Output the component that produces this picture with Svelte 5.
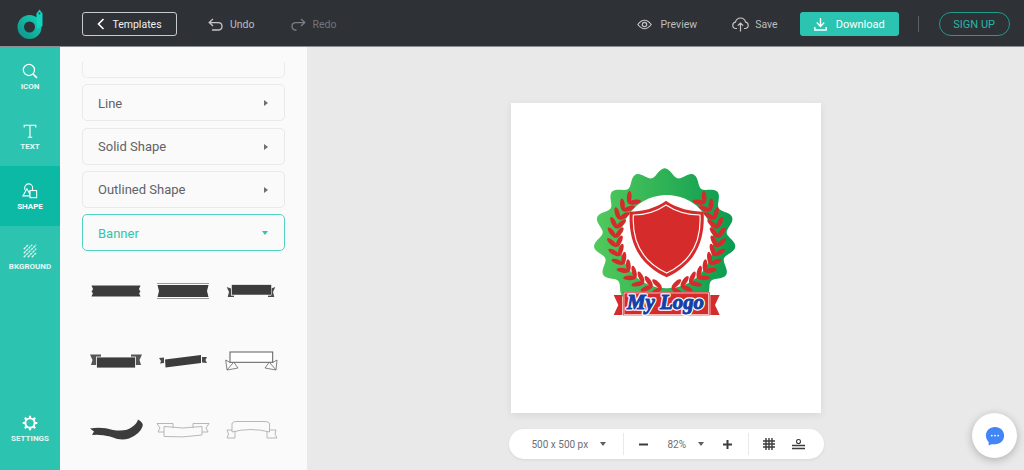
<script>
  const tools = [
    { id: 'icon', label: 'ICON' },
    { id: 'text', label: 'TEXT' },
    { id: 'shape', label: 'SHAPE', active: true },
    { id: 'bg', label: 'BKGROUND' }
  ];
  const groups = ['Line', 'Solid Shape', 'Outlined Shape'];

  // wavy seal outline around the logo
  function sealPath(cx, cy, r, amp, bumps) {
    const pts = [];
    for (let i = 0; i < 360; i++) {
      const a = (i / 360) * Math.PI * 2;
      const rr = r + amp * Math.cos(bumps * (a + Math.PI / 2));
      pts.push(`${(cx + rr * Math.cos(a)).toFixed(1)},${(cy + rr * Math.sin(a)).toFixed(1)}`);
    }
    return 'M' + pts.join('L') + 'Z';
  }
  const seal = sealPath(239, 238, 200, 13, 15);

  // laurel leaves of the right branch, the left one is a mirrored <use>
  const leaves = [];
  for (let deg = 84; deg >= -42; deg -= 10.5) {
    const a = (deg * Math.PI) / 180;
    const sx = 245 + 153 * Math.cos(a);
    const sy = 232 + 153 * Math.sin(a);
    for (const rot of [deg - 52, deg - 128]) {
      const r = (rot * Math.PI) / 180;
      leaves.push({ x: sx + 18 * Math.cos(r), y: sy + 18 * Math.sin(r), rot });
    }
  }
</script>

<div class="app">
  <header class="topbar">
    <svg class="brand" width="27" height="30" viewBox="0 0 27 30" aria-hidden="true">
      <defs>
        <linearGradient id="ring" x1="0" x2="1" y1="1" y2="0">
          <stop offset="0" stop-color="#0f9a8e"/>
          <stop offset="1" stop-color="#16c9b2"/>
        </linearGradient>
      </defs>
      <circle cx="12.500" cy="18" r="8.750" fill="none" stroke="url(#ring)" stroke-width="6.500"/>
      <path d="M19.500 14 V4.500 L22.500 .5 L25.500 4.500 V17 L20 20 Z" fill="#10d4bd"/>
      <circle cx="22.500" cy="4.500" r=".9" fill="#2e3136"/>
    </svg>
    <button class="tpl">
      <svg width="8" height="12" viewBox="0 0 8 12" aria-hidden="true"><path d="M6.500 1 L1.500 6 L6.500 11" fill="none" stroke="#fff" stroke-width="1.600"/></svg>
      Templates
    </button>
    <span class="act undo">
      <svg width="15" height="13" viewBox="0 0 15 13" aria-hidden="true"><path d="M5 1 L1.200 4.600 L5 8 M1.500 4.600 H10 Q14 4.600 14 8.200 Q14 12 10 12 H4" fill="none" stroke="#c4c6c8" stroke-width="1.300"/></svg>
      Undo
    </span>
    <span class="act redo">
      <svg width="15" height="13" viewBox="0 0 15 13" aria-hidden="true"><path d="M10 1 L13.800 4.600 L10 8 M13.500 4.600 H5 Q1 4.600 1 8.200 Q1 12 5 12 H5.500" fill="none" stroke="#7b7e81" stroke-width="1.300"/></svg>
      Redo
    </span>
    <span class="act preview">
      <svg width="15" height="11" viewBox="0 0 15 11" aria-hidden="true"><path d="M.8 5.500 Q7.500 -3 14.200 5.500 Q7.500 14 .8 5.500 Z" fill="none" stroke="#c4c6c8" stroke-width="1.200"/><circle cx="7.500" cy="5.500" r="2.200" fill="none" stroke="#c4c6c8" stroke-width="1.200"/></svg>
      Preview
    </span>
    <span class="act save">
      <svg width="17" height="15" viewBox="0 0 17 15" aria-hidden="true"><path d="M5 11.500 H4 Q.8 11.500 .8 8.300 Q.8 5.600 3.400 5.200 Q4.600 1 8.500 1 Q12.500 1 13.600 5.200 Q16.200 5.600 16.200 8.300 Q16.200 11.500 13 11.500 H12 M8.500 14.500 V6 M5.800 8.600 L8.500 6 L11.200 8.600" fill="none" stroke="#c4c6c8" stroke-width="1.200"/></svg>
      Save
    </span>
    <button class="download">
      <svg width="13" height="13" viewBox="0 0 13 13" aria-hidden="true"><path d="M6.500 0 V8 M2.800 4.600 L6.500 8.400 L10.200 4.600 M.8 9 V12 H12.200 V9" fill="none" stroke="#fff" stroke-width="1.400"/></svg>
      Download
    </button>
    <span class="sep"></span>
    <button class="signup">SIGN UP</button>
  </header>

  <div class="body">
    <nav class="rail">
      {#each tools as t}
        <div class="tool" class:active={t.active}>
          {#if t.id === 'icon'}
            <svg width="16" height="16" viewBox="0 0 18 18" aria-hidden="true"><circle cx="7.800" cy="7.800" r="6.300" fill="none" stroke="#fff" stroke-width="1.400"/><path d="M12.400 12.400 L16.800 16.800" stroke="#fff" stroke-width="1.800"/></svg>
          {:else if t.id === 'text'}
            <svg width="16" height="16" viewBox="0 0 18 18" aria-hidden="true"><path d="M2.500 5 V2.500 H15.500 V5 M9 2.500 V16 M6.500 16 H11.500" fill="none" stroke="#fff" stroke-width="1.300"/></svg>
          {:else if t.id === 'shape'}
            <svg width="16" height="16" viewBox="0 0 18 18" aria-hidden="true"><circle cx="7.500" cy="5.500" r="4.500" fill="none" stroke="#fff" stroke-width="1.200"/><path d="M5.500 6.500 L1 14.500 H10 Z" fill="#0bb9a5" stroke="#fff" stroke-width="1.200"/><rect x="9" y="8.500" width="7.500" height="8" fill="#0bb9a5" stroke="#fff" stroke-width="1.200"/></svg>
          {:else}
            <svg width="16" height="16" viewBox="0 0 18 18" aria-hidden="true"><path d="M2 7 L7 2 M2 11.500 L11.500 2 M2 16 L16 2 M6.500 16 L16 6.500 M11 16 L16 11" stroke="#d8f4ef" stroke-width="1.500" stroke-dasharray="3 .8"/></svg>
          {/if}
          <span>{t.label}</span>
        </div>
      {/each}
      <div class="tool settings">
        <svg width="16" height="16" viewBox="0 0 18 18" aria-hidden="true"><circle cx="9" cy="9" r="5.200" fill="none" stroke="#fff" stroke-width="2.200"/><path d="M9 .8 V3.500 M9 14.500 V17.200 M.8 9 H3.500 M14.500 9 H17.200 M3.200 3.200 L5 5 M13 13 L14.800 14.800 M3.200 14.800 L5 13 M13 5 L14.800 3.200" stroke="#fff" stroke-width="2.400"/></svg>
        <span>SETTINGS</span>
      </div>
    </nav>

    <aside class="panel">
      <div class="stub"></div>
      {#each groups as g}
        <div class="group">{g}<i class="arrow"></i></div>
      {/each}
      <div class="group open">Banner<i class="arrow down"></i></div>

      <div class="banners">
        <svg viewBox="0 0 64 32" aria-hidden="true">
          <path d="M7.500 10.500 H56.500 L55 14 L56.500 17 L55 18 L56.500 21.500 H7.500 L9 18 L7.500 17 L9 14 Z" fill="#3c3c3c"/>
        </svg>
        <svg viewBox="0 0 64 32" aria-hidden="true">
          <path d="M6 8.500 H58 M6 23.500 H58" stroke="#9a9a9a" stroke-width="1"/>
          <path d="M6.500 10 H57.500 L56 16 L57.500 22 H6.500 L8 16 Z" fill="#3c3c3c"/>
        </svg>
        <svg viewBox="0 0 64 32" aria-hidden="true">
          <path d="M7.700 12 L12 13.500 V20.500 H15 V22 H8.700 L10 17 Z M56.300 12 L52 13.500 V20.500 H49 V22 H55.300 L54 17 Z" fill="#4a4a4a"/>
          <rect x="12.500" y="9.700" width="40" height="10.300" fill="#3c3c3c" stroke="#fff" stroke-width=".5"/>
        </svg>
        <svg viewBox="0 0 64 32" aria-hidden="true">
          <path d="M6 9.500 H17 V20 H7 L8.500 15 Z M58 9.500 H47 V20 H57 L55.500 15 Z" fill="#555"/>
          <rect x="12.500" y="12" width="39" height="11" fill="#3c3c3c" stroke="#fafafa" stroke-width=".8"/>
        </svg>
        <svg viewBox="0 0 64 32" aria-hidden="true">
          <path d="M8 13 L13 12.500 V18 L9 18.500 L10 16 Z M56 12 L51 12 V17.500 L56 18 L54.500 15 Z" fill="#4a4a4a"/>
          <path d="M14 14.500 L50 10 L50 18 L14.500 22.500 Z" fill="#3c3c3c"/>
        </svg>
        <svg viewBox="0 0 64 32" aria-hidden="true">
          <rect x="11" y="7" width="42.700" height="10.300" fill="#fff" stroke="#5c5c5c" stroke-width="1"/>
          <path d="M11 17.500 L6.700 15 L8 25 L19 23 L15 17.500 M8 25 L14 18 M53.700 17.500 L58 15 L57 25 L46 23 L50 17.500 M57 25 L51 18" fill="none" stroke="#666" stroke-width=".8"/>
        </svg>
        <svg viewBox="0 0 64 32" aria-hidden="true">
          <path d="M6 14.500 Q18 12.500 29 16 Q42 18 48 13 Q53 9.500 54 5.500 Q60 9 58.500 12.500 Q56 20 45 24.500 Q36 27 26 22.500 Q16 20 8 21 L10 17.500 Z" fill="#3c3c3c"/>
        </svg>
        <svg viewBox="0 0 64 32" aria-hidden="true">
          <g fill="#fafafa" stroke="#a6a6a6" stroke-width=".8">
            <path d="M6 9.500 H22 V18 H7 L9 14 Z"/>
            <path d="M58 9.500 H42 V18 H57 L55 14 Z"/>
            <path d="M13 12.500 Q32 15.500 51 12.500 V21 Q32 24 13 22.500 Z"/>
          </g>
        </svg>
        <svg viewBox="0 0 64 32" aria-hidden="true">
          <g fill="#fafafa" stroke="#a6a6a6" stroke-width=".8">
            <path d="M8 16 H16 V24 H8 L9.500 20 Z"/>
            <path d="M57 16 H48 V24 H58 L56 20 Z"/>
            <path d="M13 18 V10 Q13 7.500 18 7.500 H45 Q50.500 7.500 50.500 10 V18 Q32 13 13 18 Z"/>
          </g>
        </svg>
      </div>
    </aside>

    <main class="stage">
      <div class="canvas">
        <svg class="logo" width="160" height="165" viewBox="0 0 480 495" aria-label="My Logo">
          <defs>
            <linearGradient id="green" x1="0" x2="1" y1="0" y2="0">
              <stop offset="0" stop-color="#52ca5c"/>
              <stop offset="1" stop-color="#0a9a50"/>
            </linearGradient>
            <g id="branch">
              {#each leaves as l}
                <ellipse cx={l.x} cy={l.y} rx="19" ry="7" fill="#d62b2b" transform="rotate({l.rot} {l.x} {l.y})"/>
              {/each}
            </g>
          </defs>
          <path d={seal} fill="url(#green)"/>
          <circle cx="245" cy="245" r="140" fill="#fff"/>
          <use href="#branch"/>
          <use href="#branch" transform="translate(490 0) scale(-1 1)"/>
          <path d="M243 122 C275 145 320 155 356 155 C360 240 335 310 245 352 C155 310 130 240 134 155 C170 155 212 145 243 122 Z" fill="#d62b2b"/>
          <path d="M243 135 C273 155 312 165 345 165 C349 240 325 302 245 339 C165 302 141 240 145 165 C178 165 214 155 243 135 Z" fill="#d62b2b" stroke="#fff" stroke-width="3.500"/>
          <path d="M86 405 H112 V465 H86 L100 435 Z M404 405 H376 V465 H404 L390 435 Z" fill="#d62b2b"/>
          <rect x="114" y="396" width="260" height="70" fill="#d62b2b"/>
          <rect x="117" y="399" width="254" height="64" fill="none" stroke="#fff" stroke-width="2"/>
          <text class="mark halo" x="126" y="448" textLength="231" lengthAdjust="spacingAndGlyphs">My Logo</text>
          <text class="mark" x="126" y="448" textLength="231" lengthAdjust="spacingAndGlyphs">My Logo</text>
        </svg>
      </div>
      <div class="toolbar">
        <span class="tb-size">500 x 500 px</span>
        <i class="caret"></i>
        <span class="tb-sep first"></span>
        <svg class="minus" width="9" height="3" viewBox="0 0 9 3" aria-hidden="true"><rect width="9" height="2" y=".5" fill="#3c3c3c"/></svg>
        <span class="tb-zoom">82%</span>
        <i class="caret small"></i>
        <svg class="plus" width="9" height="9" viewBox="0 0 9 9" aria-hidden="true"><path d="M0 3.500 H9 V5.500 H0 Z M3.500 0 H5.500 V9 H3.500 Z" fill="#3c3c3c"/></svg>
        <span class="tb-sep second"></span>
        <svg class="gridicon" width="12" height="12" viewBox="0 0 12 12" aria-hidden="true"><path d="M0 3 H12 M0 6 H12 M0 9 H12 M3 0 V12 M6 0 V12 M9 0 V12" stroke="#3c3c3c" stroke-width="1.400"/></svg>
        <svg class="basline" width="13" height="11" viewBox="0 0 13 11" aria-hidden="true"><circle cx="6.500" cy="2.500" r="2" fill="none" stroke="#3c3c3c" stroke-width="1.100"/><path d="M0 6.500 H13 M0 9.500 H13" stroke="#3c3c3c" stroke-width="1.300"/></svg>
      </div>
      <button class="chat" aria-label="Chat">
        <svg width="20" height="20" viewBox="0 0 22 22" aria-hidden="true">
          <path d="M11 1 C17 1 21 5 21 10.500 C21 16 17 20 11 20 H7 L4 21.500 V17.500 C2 15.500 1 13 1 10.500 C1 5 5 1 11 1 Z" fill="#4285f4"/>
          <circle cx="7.500" cy="10.500" r="1" fill="#fff"/><circle cx="11" cy="10.500" r="1" fill="#fff"/><circle cx="14.500" cy="10.500" r="1" fill="#fff"/>
        </svg>
      </button>
    </main>
  </div>
</div>

<style>
  :global(body) {
    margin: 0;
    font-family: Roboto, "Liberation Sans", sans-serif;
  }

  .app {
    width: 1024px;
    height: 470px;
    display: flex;
    flex-direction: column;
    overflow: hidden;
  }

  .topbar {
    height: 46px;
    flex-shrink: 0;
    box-sizing: border-box;
    padding-top: 2px;
    background: #2e3136;
    box-shadow: 0 1px 0 #8b8d90;
    position: relative;
    z-index: 1;
    display: flex;
    align-items: center;
    font-size: 10.500px;
  }

  .brand { margin: 0 0 0 17px; }

  button {
    font-family: inherit;
    cursor: pointer;
    box-sizing: border-box;
  }

  .tpl {
    margin-left: 38px;
    width: 95px;
    height: 24px;
    padding: 0;
    background: transparent;
    border: 1px solid #c9cacc;
    border-radius: 3px;
    color: #f0f0f0;
    font-size: 10.500px;
    display: flex;
    align-items: center;
    justify-content: center;
    gap: 7px;
  }

  .act {
    display: flex;
    align-items: center;
    gap: 8px;
    color: #bcbec0;
  }
  .undo { margin-left: 31px; gap: 7px; }
  .redo { margin-left: 36px; gap: 7px; color: #72767a; }
  .preview { margin-left: 301px; }
  .save { margin-left: 35px; gap: 6px; }

  .download {
    margin-left: 22px;
    width: 99px;
    height: 24px;
    padding: 0;
    border: none;
    border-radius: 3px;
    background: #2ac4b0;
    color: #fff;
    font-size: 11px;
    display: flex;
    align-items: center;
    justify-content: center;
    gap: 9px;
  }

  .sep {
    width: 1px;
    height: 16px;
    margin-left: 19px;
    background: #5c5f63;
  }

  .signup {
    margin-left: 20px;
    width: 71px;
    height: 24px;
    padding: 0;
    border: 1px solid #1f9c8d;
    border-radius: 12px;
    background: transparent;
    color: #28b7a5;
    font-size: 11px;
  }

  .body {
    flex: 1;
    display: flex;
    min-height: 0;
    position: relative;
  }

  .rail {
    width: 60px;
    flex-shrink: 0;
    background: #2cc4b0;
    display: flex;
    flex-direction: column;
  }

  .tool {
    height: 60px;
    display: flex;
    flex-direction: column;
    align-items: center;
    padding-top: 15px;
    box-sizing: border-box;
    gap: 3px;
    color: #e4f8f4;
    font-size: 8px;
    font-weight: 700;
  }
  .tool svg { margin-top: 2px; }
  .tool.active {
    background: #0bb9a5;
    color: #fff;
  }
  .settings { margin-top: auto; margin-bottom: 12px; }

  .panel {
    width: 247px;
    flex-shrink: 0;
    box-sizing: border-box;
    background: #fafafa;
    padding: 16px 22px 0;
    display: flex;
    flex-direction: column;
    gap: 6.33px;
  }

  .stub {
    height: 16px;
    flex-shrink: 0;
    box-sizing: border-box;
    border: 1px solid #ebebeb;
    border-top: none;
    border-radius: 0 0 5px 5px;
  }

  .group {
    height: 37px;
    flex-shrink: 0;
    box-sizing: border-box;
    padding: 1px 16px 0 15px;
    border: 1px solid #e9e9e9;
    border-radius: 5px;
    display: flex;
    align-items: center;
    justify-content: space-between;
    color: #5f6368;
    font-size: 13px;
  }
  .group.open {
    border-color: #52d2c0;
    color: #33c4b0;
  }

  .arrow {
    width: 0;
    height: 0;
    border-left: 4px solid #6b6f75;
    border-top: 3px solid transparent;
    border-bottom: 3px solid transparent;
  }
  .arrow.down {
    border-left: 3.500px solid transparent;
    border-right: 3.500px solid transparent;
    border-top: 4px solid #33c4b0;
    border-bottom: none;
  }

  .banners {
    margin-top: -1px;
    display: grid;
    grid-template-columns: repeat(3, 1fr);
    grid-auto-rows: 69.500px;
    justify-items: center;
    align-items: center;
  }
  .banners svg {
    width: 64px;
    height: 32px;
  }

  .stage {
    flex: 1;
    background: #e9e9e9;
    padding: 57px 0 0 1px;
    display: flex;
    flex-direction: column;
    align-items: center;
    gap: 16px;
    min-width: 0;
  }

  .canvas {
    width: 310px;
    height: 310px;
    flex-shrink: 0;
    background: #fff;
    position: relative;
    box-shadow: 0 2px 8px rgba(0, 0, 0, .08);
  }

  .logo {
    position: absolute;
    left: 74px;
    top: 57px;
  }

  .mark {
    font-family: "Liberation Serif", serif;
    font-weight: 700;
    font-style: italic;
    font-size: 60px;
    fill: #1440a8;
    stroke: #1440a8;
    stroke-width: 3px;
  }
  .mark.halo {
    fill: #fff;
    stroke: #fff;
    stroke-width: 10px;
    stroke-linejoin: round;
  }

  .toolbar {
    width: 315px;
    height: 30px;
    flex-shrink: 0;
    box-sizing: border-box;
    background: #fff;
    border-radius: 15px;
    display: flex;
    align-items: center;
    padding-left: 23px;
    box-shadow: 0 1px 3px rgba(0, 0, 0, .08);
    color: #6b6f75;
    font-size: 10px;
  }

  .tb-size { width: 55px; white-space: nowrap; }
  .caret {
    width: 0;
    height: 0;
    margin-left: 13px;
    border-left: 3px solid transparent;
    border-right: 3px solid transparent;
    border-top: 4px solid #5b5f64;
  }
  .caret.small { margin-left: 12px; }

  .tb-sep {
    width: 1px;
    height: 22px;
    background: #e9e9e9;
  }
  .tb-sep.first { margin-left: 17px; }
  .minus { margin-left: 15px; }
  .tb-zoom { margin-left: 20px; width: 18px; }
  .plus { margin-left: 19px; }
  .tb-sep.second { margin-left: 16px; }
  .gridicon { margin-left: 14px; }
  .basline { margin-left: 17px; }

  .chat {
    position: absolute;
    right: 7px;
    bottom: 12px;
    width: 45px;
    height: 45px;
    padding: 0;
    border: none;
    border-radius: 50%;
    background: #fff;
    box-shadow: 0 2px 8px rgba(0, 0, 0, .25);
    display: flex;
    align-items: center;
    justify-content: center;
  }
</style>
